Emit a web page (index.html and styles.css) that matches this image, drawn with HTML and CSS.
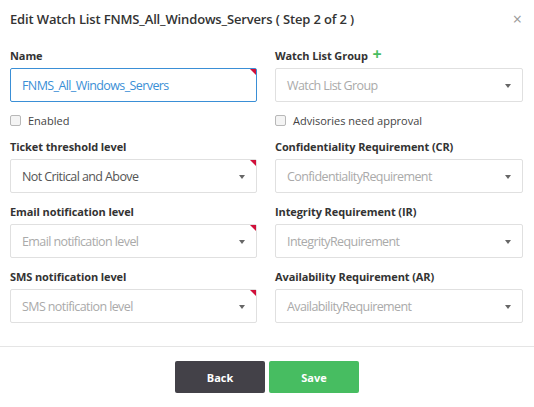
FILE: index.html
```html
<!DOCTYPE html>
<html>
<head>
<meta charset="utf-8">
<link rel="stylesheet" href="styles.css">
</head>
<body>
<div class="modal">
  <div class="header">
    <h1 class="title">Edit Watch List FNMS_All_Windows_Servers ( Step 2 of 2 )</h1>
    <span class="close">×</span>
  </div>
  <div class="body">
    <div class="grid">
      <div class="field">
        <label class="label">Name</label>
        <div class="control focused required"><span class="value name">FNMS_All_Windows_Servers</span></div>
      </div>
      <div class="field">
        <label class="label">Watch List Group <span class="plus">+</span></label>
        <div class="control select"><span class="placeholder">Watch List Group</span><span class="caret"></span></div>
      </div>
      <div class="check"><span class="box"></span>Enabled</div>
      <div class="check"><span class="box"></span>Advisories need approval</div>
      <div class="field">
        <label class="label">Ticket threshold level</label>
        <div class="control select required"><span class="value">Not Critical and Above</span><span class="caret"></span></div>
      </div>
      <div class="field">
        <label class="label">Confidentiality Requirement (CR)</label>
        <div class="control select"><span class="placeholder">ConfidentialityRequirement</span><span class="caret"></span></div>
      </div>
      <div class="field">
        <label class="label">Email notification level</label>
        <div class="control select required"><span class="placeholder">Email notification level</span><span class="caret"></span></div>
      </div>
      <div class="field">
        <label class="label">Integrity Requirement (IR)</label>
        <div class="control select"><span class="placeholder">IntegrityRequirement</span><span class="caret"></span></div>
      </div>
      <div class="field">
        <label class="label">SMS notification level</label>
        <div class="control select required"><span class="placeholder">SMS notification level</span><span class="caret"></span></div>
      </div>
      <div class="field">
        <label class="label">Availability Requirement (AR)</label>
        <div class="control select"><span class="placeholder">AvailabilityRequirement</span><span class="caret"></span></div>
      </div>
    </div>
  </div>
  <div class="footer">
    <button class="btn back">Back</button>
    <button class="btn save">Save</button>
  </div>
</div>
</body>
</html>
```
FILE: styles.css
```css
* { box-sizing: border-box; }
html, body { margin: 0; padding: 0; background: #fff; }
body { font-family: "Open Sans", "Noto Sans", sans-serif; color: #333; }
.modal { width: 534px; height: 407px; background: #fff; }
.header { display: flex; align-items: center; justify-content: space-between; height: 38px; padding: 0 10px; }
.title { margin: 0; font-size: 13px; font-weight: 600; color: #333; letter-spacing: -0.15px; }
.close { font-size: 16px; color: #999; padding-right: 2px; line-height: 1; }
.body { padding: 10px 11px 0 10px; }
.grid { display: grid; grid-template-columns: 247px 248px; column-gap: 18px; }
.field { display: flex; flex-direction: column; margin-bottom: 11px; }
.label { font-size: 11px; font-weight: 700; line-height: 16px; margin-bottom: 4px; color: #333; letter-spacing: -0.1px; }
.plus { color: #47bd61; font-size: 16px; font-weight: 700; line-height: 10px; margin-left: 2px; }
.control { position: relative; height: 34px; border: 1px solid #e0e0e0; border-radius: 2px; display: flex; align-items: center; padding: 0 11px; font-size: 12.5px; letter-spacing: -0.6px; }
.control.focused { border-color: #3a8fd6; }
.required::after { content: ""; position: absolute; top: 0; right: 0; border-style: solid; border-width: 0 6px 6px 0; border-color: transparent #d0103a transparent transparent; }
.value { color: #555; }
.value.name { color: #3a8fd6; }
.placeholder { color: #aaa; }
.caret { position: absolute; right: 11px; top: 15px; border-style: solid; border-width: 4px 3.5px 0 3.5px; border-color: #666 transparent transparent transparent; }
.check { display: flex; align-items: center; height: 18px; font-size: 11px; color: #444; margin: -2px 0 10px; }
.box { width: 11px; height: 11px; border: 1px solid #b8b8b8; border-radius: 2px; background: #f4f4f4; margin-right: 7px; }
.footer { margin-top: 12px; border-top: 1px solid #e5e5e5; display: flex; justify-content: center; gap: 4px; padding-top: 14px; }
.btn { width: 90px; height: 32px; border: none; border-radius: 2px; color: #fff; font-family: "Open Sans", sans-serif; font-size: 11px; font-weight: 700; }
.back { background: #434148; }
.save { background: #47bd61; }
```
